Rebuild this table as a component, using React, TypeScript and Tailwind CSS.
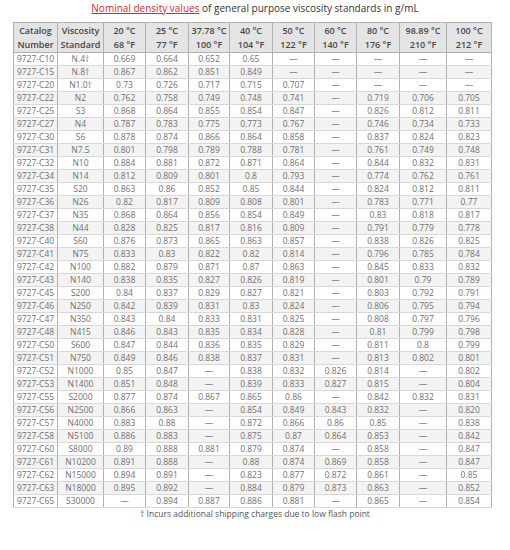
import React from "react";

const D = "—";

const HEADERS: [string, string][] = [
  ["Catalog", "Number"],
  ["Viscosity", "Standard"],
  ["20 °C", "68 °F"],
  ["25 °C", "77 °F"],
  ["37.78 °C", "100 °F"],
  ["40 °C", "104 °F"],
  ["50 °C", "122 °F"],
  ["60 °C", "140 °F"],
  ["80 °C", "176 °F"],
  ["98.89 °C", "210 °F"],
  ["100 °C", "212 °F"],
];

const WIDTHS = [44, 46, 42, 43, 41, 43, 42, 42, 43, 47, 45];

const ROWS: string[][] = [
  ["9727-C10", "N.4†", "0.669", "0.664", "0.652", "0.65", D, D, D, D, D],
  ["9727-C15", "N.8†", "0.867", "0.862", "0.851", "0.849", D, D, D, D, D],
  ["9727-C20", "N1.0†", "0.73", "0.726", "0.717", "0.715", "0.707", D, D, D, D],
  ["9727-C22", "N2", "0.762", "0.758", "0.749", "0.748", "0.741", D, "0.719", "0.706", "0.705"],
  ["9727-C25", "S3", "0.868", "0.864", "0.855", "0.854", "0.847", D, "0.826", "0.812", "0.811"],
  ["9727-C27", "N4", "0.787", "0.783", "0.775", "0.773", "0.767", D, "0.746", "0.734", "0.733"],
  ["9727-C30", "S6", "0.878", "0.874", "0.866", "0.864", "0.858", D, "0.837", "0.824", "0.823"],
  ["9727-C31", "N7.5", "0.801", "0.798", "0.789", "0.788", "0.781", D, "0.761", "0.749", "0.748"],
  ["9727-C32", "N10", "0.884", "0.881", "0.872", "0.871", "0.864", D, "0.844", "0.832", "0.831"],
  ["9727-C34", "N14", "0.812", "0.809", "0.801", "0.8", "0.793", D, "0.774", "0.762", "0.761"],
  ["9727-C35", "S20", "0.863", "0.86", "0.852", "0.85", "0.844", D, "0.824", "0.812", "0.811"],
  ["9727-C36", "N26", "0.82", "0.817", "0.809", "0.808", "0.801", D, "0.783", "0.771", "0.77"],
  ["9727-C37", "N35", "0.868", "0.864", "0.856", "0.854", "0.849", D, "0.83", "0.818", "0.817"],
  ["9727-C38", "N44", "0.828", "0.825", "0.817", "0.816", "0.809", D, "0.791", "0.779", "0.778"],
  ["9727-C40", "S60", "0.876", "0.873", "0.865", "0.863", "0.857", D, "0.838", "0.826", "0.825"],
  ["9727-C41", "N75", "0.833", "0.83", "0.822", "0.82", "0.814", D, "0.796", "0.785", "0.784"],
  ["9727-C42", "N100", "0.882", "0.879", "0.871", "0.87", "0.863", D, "0.845", "0.833", "0.832"],
  ["9727-C43", "N140", "0.838", "0.835", "0.827", "0.826", "0.819", D, "0.801", "0.79", "0.789"],
  ["9727-C45", "S200", "0.84", "0.837", "0.829", "0.827", "0.821", D, "0.803", "0.792", "0.791"],
  ["9727-C46", "N250", "0.842", "0.839", "0.831", "0.83", "0.824", D, "0.806", "0.795", "0.794"],
  ["9727-C47", "N350", "0.843", "0.84", "0.833", "0.831", "0.825", D, "0.808", "0.797", "0.796"],
  ["9727-C48", "N415", "0.846", "0.843", "0.835", "0.834", "0.828", D, "0.81", "0.799", "0.798"],
  ["9727-C50", "S600", "0.847", "0.844", "0.836", "0.835", "0.829", D, "0.811", "0.8", "0.799"],
  ["9727-C51", "N750", "0.849", "0.846", "0.838", "0.837", "0.831", D, "0.813", "0.802", "0.801"],
  ["9727-C52", "N1000", "0.85", "0.847", D, "0.838", "0.832", "0.826", "0.814", D, "0.802"],
  ["9727-C53", "N1400", "0.851", "0.848", D, "0.839", "0.833", "0.827", "0.815", D, "0.804"],
  ["9727-C55", "S2000", "0.877", "0.874", "0.867", "0.865", "0.86", D, "0.842", "0.832", "0.831"],
  ["9727-C56", "N2500", "0.866", "0.863", D, "0.854", "0.849", "0.843", "0.832", D, "0.820"],
  ["9727-C57", "N4000", "0.883", "0.88", D, "0.872", "0.866", "0.86", "0.85", D, "0.838"],
  ["9727-C58", "N5100", "0.886", "0.883", D, "0.875", "0.87", "0.864", "0.853", D, "0.842"],
  ["9727-C60", "S8000", "0.89", "0.888", "0.881", "0.879", "0.874", D, "0.858", D, "0.847"],
  ["9727-C61", "N10200", "0.891", "0.888", D, "0.88", "0.874", "0.869", "0.858", D, "0.847"],
  ["9727-C62", "N15000", "0.894", "0.891", D, "0.823", "0.877", "0.872", "0.861", D, "0.85"],
  ["9727-C63", "N18000", "0.895", "0.892", D, "0.884", "0.879", "0.873", "0.863", D, "0.852"],
  ["9727-C65", "S30000", D, "0.894", "0.887", "0.886", "0.881", D, "0.865", D, "0.854"],
];

export default function App() {
  return (
    <div className="w-[510px] h-[550px] bg-white font-['Open_Sans',sans-serif]">
      {/* Title */}
      <div className="h-[22px] pt-[1px] text-center text-[10px] leading-[14px] text-[#333]">
        <a href="#" className="text-[#e3262c] underline">
          Nominal density values
        </a>{" "}
        of general purpose viscosity standards in g/mL
      </div>

      {/* Table */}
      <div className="pl-[13px]">
        <table className="w-[478px] table-fixed border-collapse border border-[#9a9a9a]">
          <colgroup>
            {WIDTHS.map((w, i) => (
              <col key={i} style={{ width: w }} />
            ))}
          </colgroup>
          <thead>
            <tr className="h-[30px] bg-[#e4e4e4]">
              {HEADERS.map(([a, b], i) => (
                <th
                  key={i}
                  className="border border-[#b0b0b0] p-0 text-center align-middle text-[9px] font-semibold leading-[14px] text-[#474747] whitespace-nowrap"
                >
                  <div>{a}</div>
                  <div>{b}</div>
                </th>
              ))}
            </tr>
          </thead>
          <tbody>
            {ROWS.map((row, r) => (
              <tr key={r} className={r % 2 === 1 ? "h-[13px] bg-[#f3f3f3]" : "h-[13px] bg-white"}>
                {row.map((cell, c) => (
                  <td
                    key={c}
                    className="border-x border-x-[#b0b0b0] border-y border-y-[#d8d8d8] p-0 text-center align-middle text-[8.5px] leading-[12px] text-[#707070] whitespace-nowrap"
                  >
                    {cell}
                  </td>
                ))}
              </tr>
            ))}
          </tbody>
        </table>
      </div>

      {/* Footnote */}
      <div className="text-center text-[8.5px] leading-[12px] text-[#555]">
        † Incurs additional shipping charges due to low flash point
      </div>
    </div>
  );
}
